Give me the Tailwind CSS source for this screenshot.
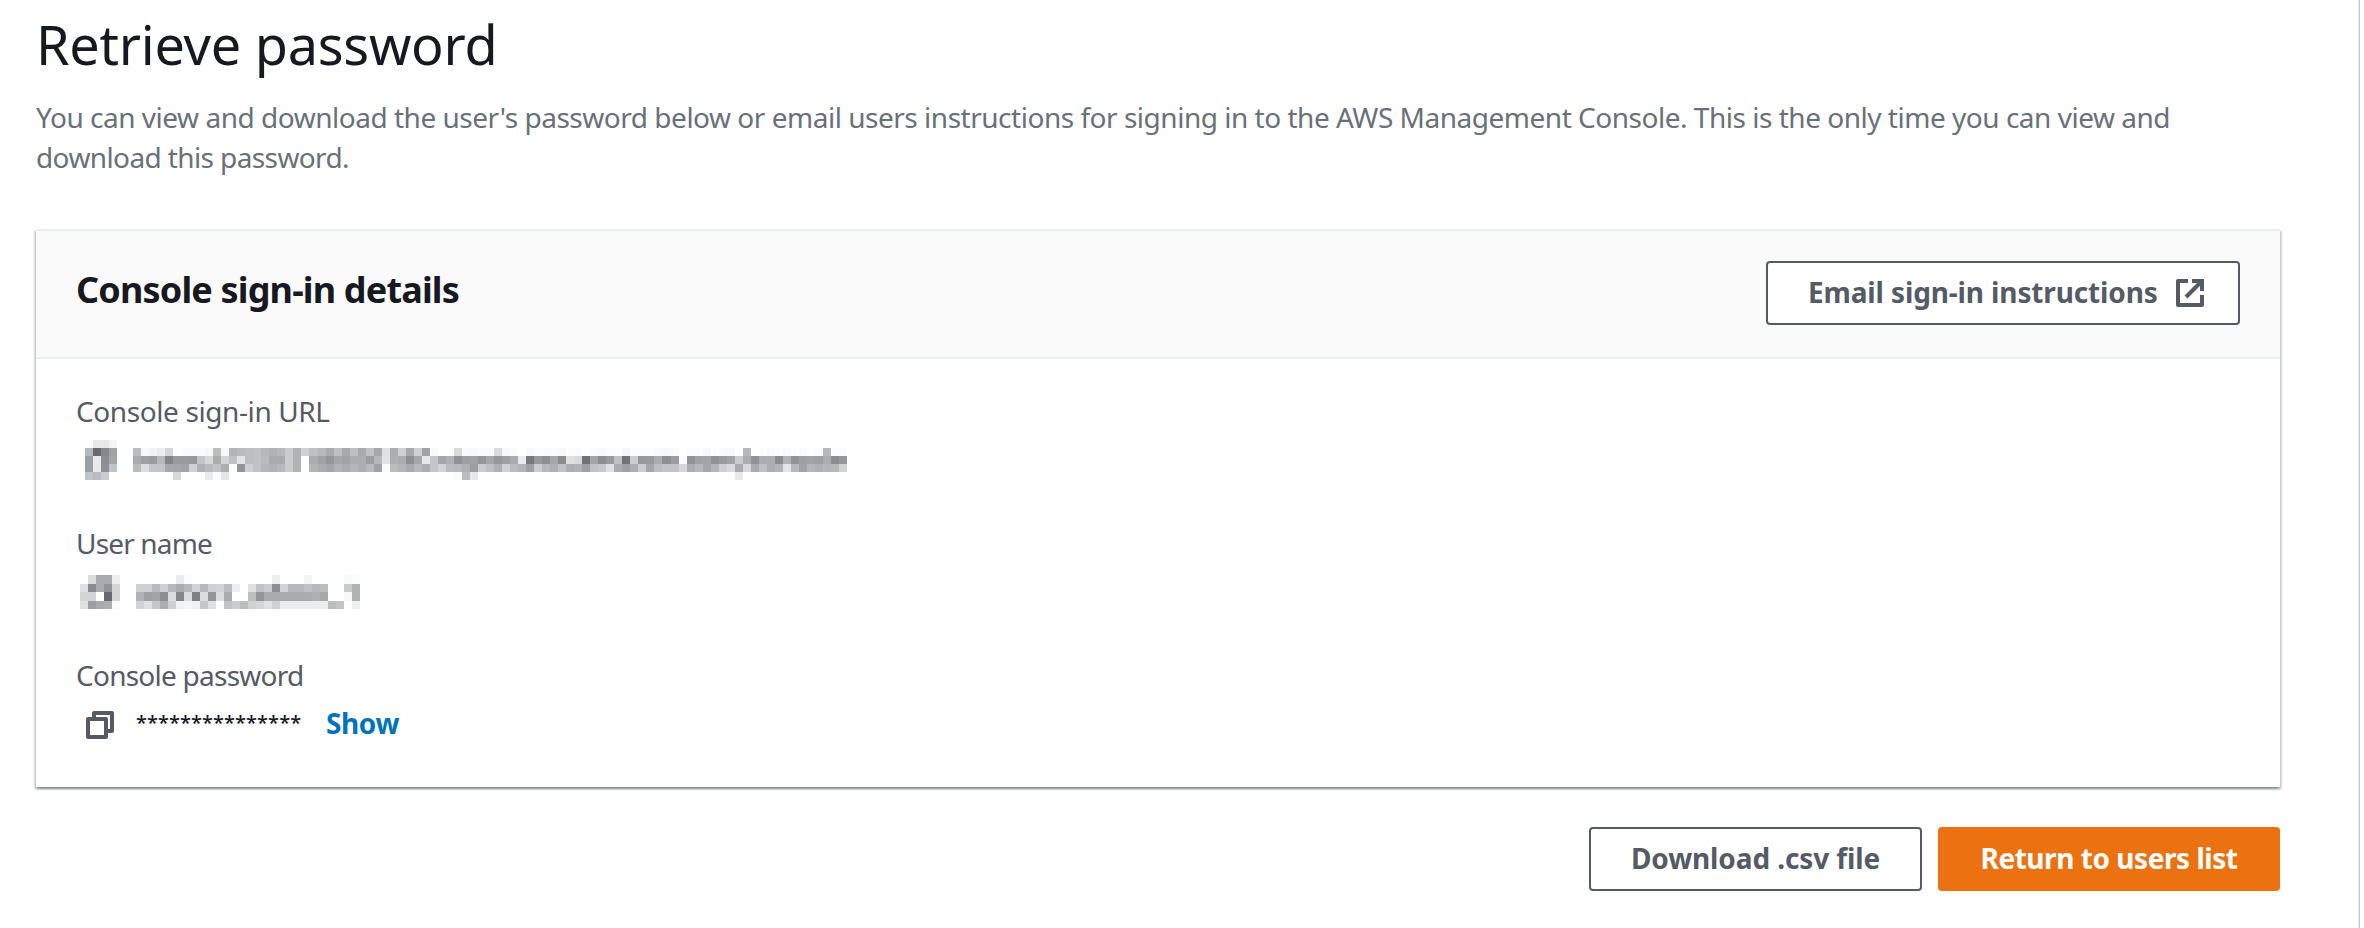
<!DOCTYPE html>
<html lang="en">
<head>
<meta charset="utf-8">
<title>Retrieve password</title>
<script src="https://cdn.jsdelivr.net/npm/@tailwindcss/browser@4"></script>
</head>
<body class="bg-white font-['Noto_Sans','Open_Sans',sans-serif] text-[28px] leading-[40px] text-[#16191f]">
<div class="flex h-[928px] w-[2364px] overflow-hidden">
  <main class="flex w-[2358px] shrink-0 flex-col pt-[14px] pr-[78px] pl-9">
    <h1 class="text-[54px] leading-[60px] font-normal tracking-[-0.26px] whitespace-nowrap">Retrieve password</h1>
    <p class="mt-[23px] whitespace-nowrap tracking-[-0.482px] text-[#687078]">You can view and download the user's password below or email users instructions for signing in to the AWS Management Console. This is the only time you can view and<br><span class="tracking-[-0.61px]">download this password.</span></p>

    <section class="mt-[52px] h-[558px] shrink-0 border-t-2 border-[#eaeded] bg-white shadow-[0_2px_2px_0_rgba(0,28,36,0.3),2px_2px_2px_0_rgba(0,28,36,0.15),-2px_2px_2px_0_rgba(0,28,36,0.15)]">
      <header class="flex h-32 items-start justify-between border-b-2 border-[#eaeded] bg-[#fafafa] pr-10 pl-10">
        <h2 class="mt-[39px] text-[36px] font-bold tracking-[-0.835px] whitespace-nowrap">Console sign-in details</h2>
        <button class="mt-[30px] flex h-16 w-[474px] items-center rounded-[4px] border-2 border-[#545b64] bg-white pl-10 text-[#545b64]">
          <span class="w-[368px] pb-[3px] text-left font-bold tracking-[-0.13px] whitespace-nowrap">Email sign-in instructions</span>
          <svg class="size-7 shrink-0" viewBox="0 0 28 28" fill="none" stroke="currentColor" stroke-width="4"><path stroke-linejoin="round" d="M12 2H2V26H26V16"/><path d="M16 2H26V12"/><path d="M26 2L10 18"/></svg>
        </button>
      </header>

      <div class="flex flex-col gap-11 pt-8 pl-10">
        <div class="flex h-[88px] flex-col">
          <div class="tracking-[-0.4px] text-[#545b64]">Console sign-in URL</div>
          <div class="mt-[9px] flex pl-[9px]">
            <svg class="h-10 w-8" data-cells="ffe8e8f5 b86c88a2 a0e98ea8 a0e992c4 c4bdccff" data-cool="1" preserveAspectRatio="none"></svg>
            <svg class="mt-2 ml-4 h-8 w-[714px]" preserveAspectRatio="none" data-cells="
bdf7f3ecd6fefbfbfbf8bdf9b4babfc2b8b2b8ccb2d0c0b9abc0aac0aac2a8e0acd0a8d0a2f9fffddafaf8fbfadaf8fbfef9fcfbfbf8fcfbfefbf8fbfdf7fcfbfdfaf8fafffbfdf8fefaf8ffb8fffdfafdfafefafdfbb8fcfc
aca09cb8859a9a98c4d8acd4c0e4bfc2baaaaaccb2ffaca295a6a2aeae9cb8e2b0ac8ea6e8c6a6b0929fa296a6969fabea78988ea68ce0da72a48e9ac072cc989aac8e9cfa92a2a4929aa2ccac92acae8cb292a0a2a0ac8c96
bbddc6c4a8a6a3d0b0bac2aefe94d0c2b6b2b8ccb2ffb4aca6b4acb6aebaa2fbbcb4aab8acc6d4bcbab09eccc0b0d2bcb4a0ccb8b0c2aeb2a0c2c8e0aca0aecca6bec4c4d6aeb8a6b6d0daaad8aac0aeb4e4b8a2b6b0b6b8d2
_5_d8_3_eafde6_28_fcbce8_32_ea_13_"></svg>
          </div>
        </div>

        <div class="flex h-[88px] flex-col">
          <div class="tracking-[-0.835px] text-[#545b64]">User name</div>
          <div class="mt-3 flex pl-1">
            <svg class="h-[34px] w-10" preserveAspectRatio="none" data-cool="1" data-cells="ffdcababee e08cab94d6 d4d4ff6ad6 e0a0abaefb"></svg>
            <svg class="ml-4 h-[34px] w-56" preserveAspectRatio="none" data-cells="
_5_ecfc_10_ee_3_f4_4_f9fc
d0d0bad0b8acb8d2b8d0d2bceeffe0c2cc8ed2b8b8c0b8bcffffcab2
b29fa48edc86dc80dc94dcaaffffbe94aaaaaaaaabacb0a8fffff8b2
d2e0c6acd0f2f6f2c6e0fec2ccbcd0d4e2d0ecececececec_0_bcc4ffee"></svg>
          </div>
        </div>

        <div class="flex h-[88px] flex-col">
          <div class="tracking-[-0.75px] text-[#545b64]">Console password</div>
          <div class="mt-2 flex items-start pl-[10px]">
            <svg class="mt-2 size-7" viewBox="0 0 28 28" fill="none" stroke="#545b64" stroke-width="4" stroke-linejoin="round"><path d="M8 8V2H26V20H20"/><path d="M2 8H20V26H2Z"/></svg>
            <span class="ml-[22px] w-[190px] text-[20px] leading-[40px] font-medium tracking-[0.05px]">***************</span>
            <a class="font-bold tracking-[-0.387px] text-[#0073bb]">Show</a>
          </div>
        </div>
      </div>
    </section>

    <div class="mt-10 flex justify-end gap-4 font-bold whitespace-nowrap">
      <button class="flex h-16 w-[333px] items-center justify-center rounded-[4px] border-2 border-[#545b64] bg-white pb-[3px] tracking-[-0.115px] text-[#545b64]">Download .csv file</button>
      <button class="flex h-16 w-[342px] items-center justify-center rounded-[4px] bg-[#ec7211] pb-[3px] tracking-[-0.456px] text-white">Return to users list</button>
    </div>
  </main>
  <div class="w-px bg-[#e8eaec]"></div>
  <div class="w-px bg-[#c3cacb]"></div>
</div>
<script>
// Redacted values: each row is a run of two-digit grey levels, one per mosaic cell; _n_ skips n cells.
document.querySelectorAll('svg[data-cells]').forEach(svg => {
  const rows = svg.dataset.cells.trim().split(/\s+/).map(r => r.replace(/_(\d+)_/g, (m, n) => 'ff'.repeat(+n)));
  const cols = Math.max(...rows.map(r => r.length)) / 2;
  svg.setAttribute('viewBox', `0 0 ${cols} ${rows.length}`);
  svg.setAttribute('shape-rendering', 'crispEdges');
  rows.forEach((row, y) => {
    for (let x = 0; x < row.length / 2; x++) {
      const g = parseInt(row.slice(x * 2, x * 2 + 2), 16);
      if (g === 255) continue;
      const d = g > 210 ? 0 : svg.dataset.cool ? 4 : 1;
      const r = document.createElementNS('http://www.w3.org/2000/svg', 'rect');
      r.setAttribute('x', x);
      r.setAttribute('y', y);
      r.setAttribute('width', 1);
      r.setAttribute('height', 1);
      r.setAttribute('fill', `rgb(${g - d},${g},${g + d})`);
      svg.appendChild(r);
    }
  });
});
</script>
</body>
</html>
